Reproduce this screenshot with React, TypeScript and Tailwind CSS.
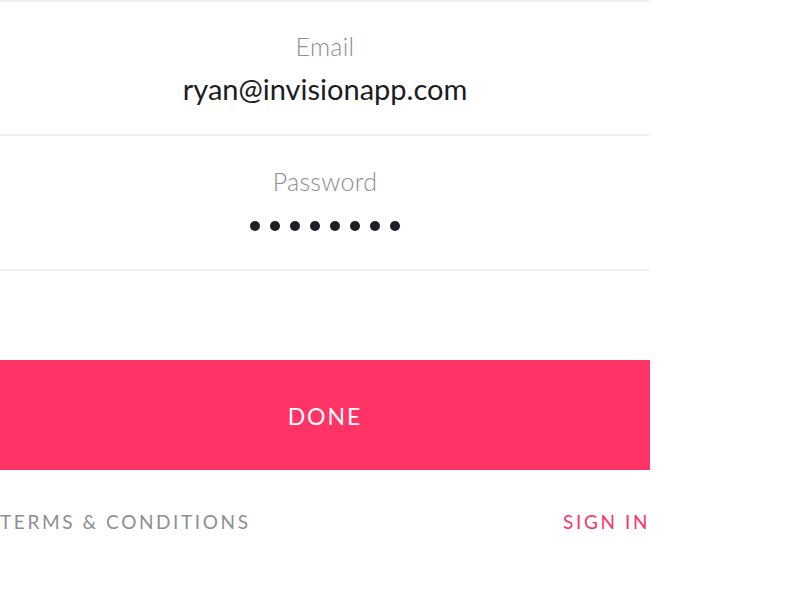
import React from "react";

export default function App() {
  const font = { fontFamily: "Lato, 'Noto Sans', sans-serif" };
  return (
    <div className="w-[800px] h-[600px] bg-white" style={font}>
      <div className="w-[650px] flex flex-col">
        <div className="h-[136px] border-t-2 border-b-2 border-[#f0f0f0] flex flex-col items-center">
          <div className="mt-[29px] text-[25px] leading-[30px] font-light tracking-[0.3px] text-[#8e8e93]">Email</div>
          <div className="mt-[10px] text-[29px] leading-[36px] text-[#1c1c24]">ryan@invisionapp.com</div>
        </div>
        <div className="h-[135px] border-b-2 border-[#f0f0f0] flex flex-col items-center">
          <div className="mt-[30px] text-[25px] leading-[30px] font-light tracking-[0.3px] text-[#8e8e93]">Password</div>
          <div className="mt-[25px] flex gap-[10px]">
            {Array.from({ length: 8 }).map((_, i) => (
              <span key={i} className="block w-[10px] h-[10px] rounded-full bg-[#1f1f29]" />
            ))}
          </div>
        </div>
        <div className="mt-[89px] h-[110px] bg-[#ff3366] flex items-center justify-center">
          <span className="text-white text-[23px] tracking-[2px] pt-[3px]">DONE</span>
        </div>
        <div className="mt-[40px] flex justify-between text-[19px] leading-[24px] tracking-[2.6px]">
          <span className="text-[#8e8e93]">TERMS &amp; CONDITIONS</span>
          <span className="text-[#ff3366]">SIGN IN</span>
        </div>
      </div>
    </div>
  );
}
